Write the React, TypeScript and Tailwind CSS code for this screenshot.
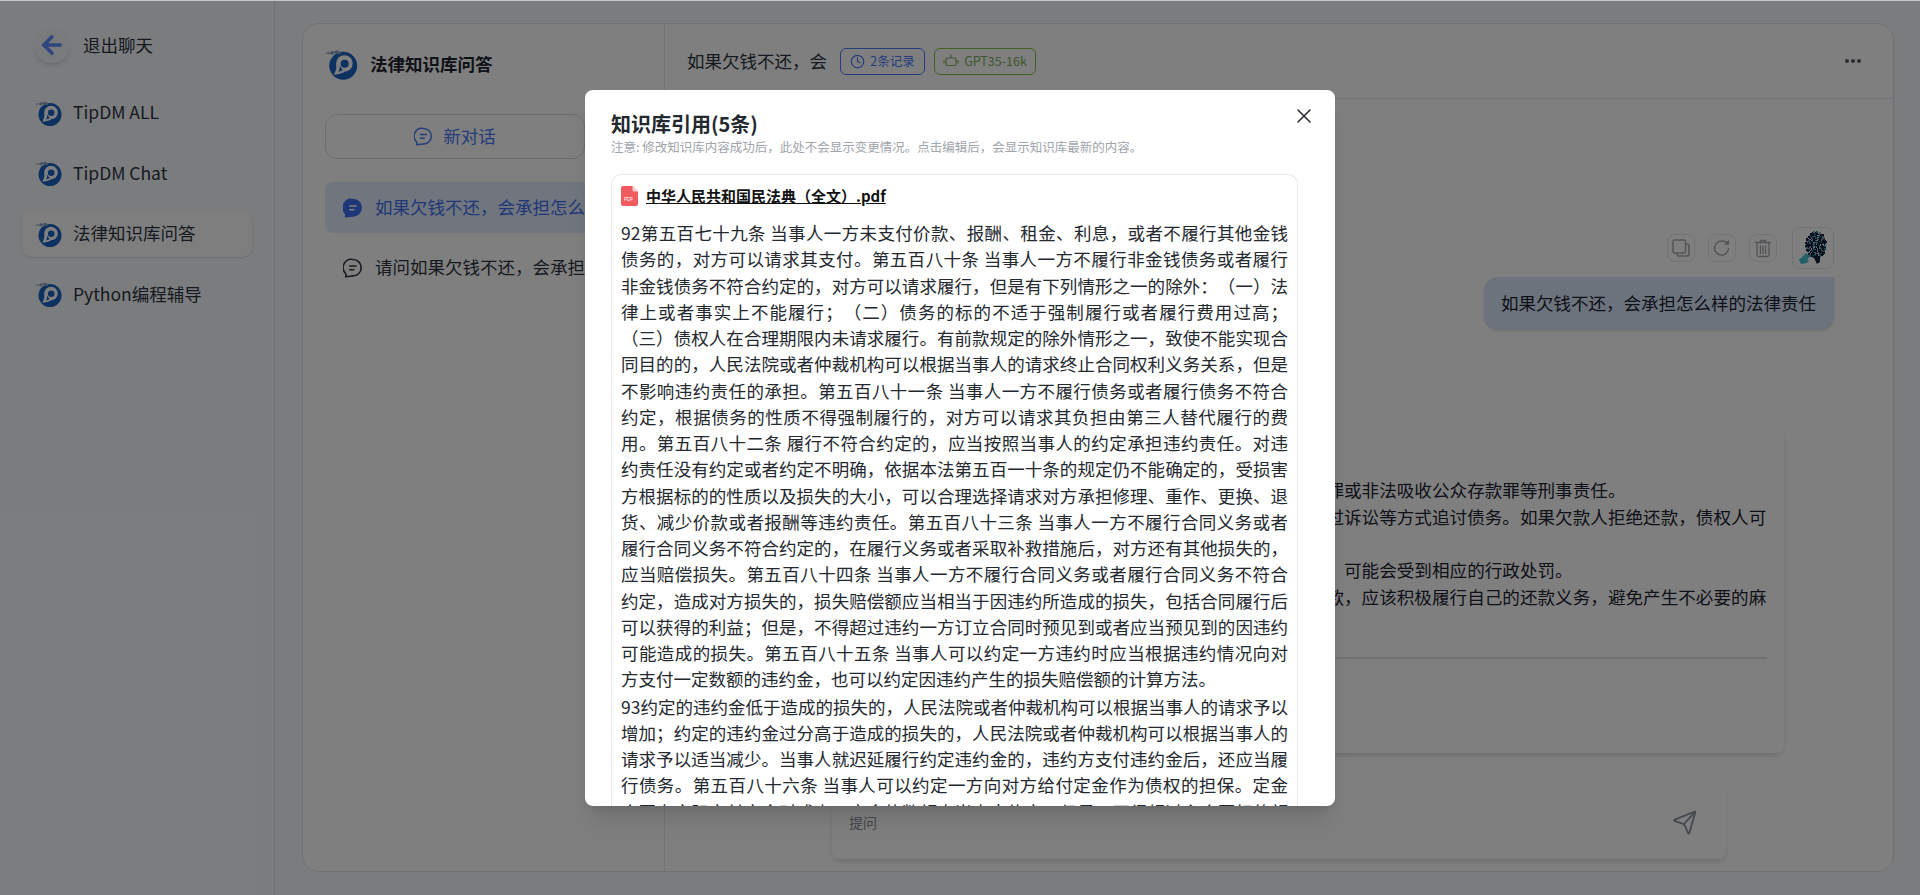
import React from 'react';
import { ArrowLeft, Clock, Send, X } from 'lucide-react';

const Logo = ({ size = 28 }: { size?: number }) => (
  <svg width={size} height={size} viewBox="0 0 28 28" className="shrink-0">
    <circle cx="15" cy="15.500" r="11.500" fill="#1a62c2" />
    <circle cx="16" cy="13.500" r="6.800" fill="#fff" />
    <path d="M9.500 13c.2 4-.6 7.500-2.300 9.800 2.500-.2 5-.6 8-1.800l1-1-6-6z" fill="#fff" />
    <circle cx="16.200" cy="13.700" r="3.300" fill="#1a62c2" />
    <path d="M12 15.500c.4 2-.3 3.800-1 4.800 1.400-.2 2.400-.6 3.600-1.400z" fill="#1a62c2" />
    <path d="M0 5.500l3-1.500 1 1 2-2 1.500 1 2-1.500 2 1 2 .5-1 2-2.500 0-2-1-2 1.500-2-1z" fill="#8aa2c6" />
  </svg>
);

const ChatIcon = ({ size = 20, filled = false }: { size?: number; filled?: boolean }) => (
  <svg width={size} height={size} viewBox="0 0 20 20" fill="none" stroke="currentColor" strokeWidth="1.600" strokeLinecap="round" className="shrink-0">
    <path d="M10 1.500a8.200 8.200 0 0 1 0 16.400c-2 0-5 .9-7.400 .7 .8-1 .7-2-.2-3.400A8.200 8.200 0 0 1 10 1.500z" fill={filled ? 'currentColor' : 'none'} strokeLinejoin="round" />
    <path d="M6.800 8h6.400M6.800 11.800h4" stroke={filled ? '#fff' : 'currentColor'} />
  </svg>
);

const RobotIcon = () => (
  <svg width="16" height="16" viewBox="0 0 16 16" fill="none" stroke="currentColor" strokeWidth="1.200" strokeLinecap="round">
    <path d="M8 2v2.500" />
    <rect x="3" y="5" width="10" height="7.500" rx="1.500" />
    <path d="M1 7.500v2.500M15 7.500v2.500" />
  </svg>
);

const CopyIcon = () => (
  <svg width="20" height="20" viewBox="0 0 20 20" fill="none" stroke="currentColor" strokeWidth="1.500" strokeLinejoin="round">
    <rect x="2" y="2" width="12.500" height="13" rx="2" />
    <path d="M14.500 6H16a2 2 0 0 1 2 2v8a2 2 0 0 1-2 2H8a2 2 0 0 1-2-2v-1" />
  </svg>
);

const RefreshIcon = () => (
  <svg width="20" height="20" viewBox="0 0 20 20" fill="none" stroke="currentColor" strokeWidth="1.500" strokeLinecap="round">
    <path d="M16.500 10.500A7 7 0 1 1 10.500 3.200c2-.1 3.800.6 5 1.800" />
    <path d="M17 1.800v5h-5z" fill="currentColor" stroke="none" />
  </svg>
);

const TrashIcon = () => (
  <svg width="18" height="20" viewBox="0 0 18 20" fill="none" stroke="currentColor" strokeWidth="1.300" strokeLinecap="round">
    <path d="M1.500 4.500h15M6.500 4.500V2.500h5v2M3 4.500v12.500a1.500 1.500 0 0 0 1.500 1.500h9a1.500 1.500 0 0 0 1.500-1.500V4.500" />
    <path d="M6.500 8v7.500M9 8v7.500M11.500 8v7.500" />
  </svg>
);

const PdfIcon = () => (
  <svg width="17" height="20" viewBox="0 0 17 20" className="shrink-0">
    <path d="M2 0h9.500L17 5.500V18a2 2 0 0 1-2 2H2a2 2 0 0 1-2-2V2a2 2 0 0 1 2-2z" fill="#ef5b5f" />
    <path d="M11.500 0L17 5.500h-4a1.500 1.500 0 0 1-1.500-1.500z" fill="#fbd0d1" />
    <text x="3" y="15" fontSize="4.500" fill="#fff" fontFamily="Liberation Sans">PDF</text>
  </svg>
);

// scribbled pixel portrait used as the user's avatar
const avatarPixels = Array.from({ length: 240 }, (_, i) => {
  const a = i * 2.399;
  const r = Math.sqrt(i / 240) * 12;
  return {
    x: Math.round(17 + Math.cos(a) * r * 0.85),
    y: Math.round(14 + Math.sin(a) * r * 1.1),
    fill: i % 11 === 0 ? '#cfe3ee' : i % 6 === 0 ? '#2f8ea6' : i % 5 === 0 ? '#9aa7b5' : '#14233d',
  };
});

const Avatar = () => (
  <svg width="30" height="36" viewBox="0 0 30 36">
    {avatarPixels.map((p, i) => (
      <rect key={i} x={p.x} y={p.y} width="2" height="2" fill={p.fill} />
    ))}
    <path d="M1 30l7-7 4 3-3 4 2 0-2 3-6 1z" fill="#45c3cf" />
    <path d="M15 26h7v6l-3 2z" fill="#14233d" />
  </svg>
);

const agents = ['TipDM ALL', 'TipDM Chat', '法律知识库问答', 'Python编程辅导'];

const para92 =
  '92第五百七十九条 当事人一方未支付价款、报酬、租金、利息，或者不履行其他金钱债务的，对方可以请求其支付。第五百八十条 当事人一方不履行非金钱债务或者履行非金钱债务不符合约定的，对方可以请求履行，但是有下列情形之一的除外：（一）法律上或者事实上不能履行；（二）债务的标的不适于强制履行或者履行费用过高；（三）债权人在合理期限内未请求履行。有前款规定的除外情形之一，致使不能实现合同目的的，人民法院或者仲裁机构可以根据当事人的请求终止合同权利义务关系，但是不影响违约责任的承担。第五百八十一条 当事人一方不履行债务或者履行债务不符合约定，根据债务的性质不得强制履行的，对方可以请求其负担由第三人替代履行的费用。第五百八十二条 履行不符合约定的，应当按照当事人的约定承担违约责任。对违约责任没有约定或者约定不明确，依据本法第五百一十条的规定仍不能确定的，受损害方根据标的的性质以及损失的大小，可以合理选择请求对方承担修理、重作、更换、退货、减少价款或者报酬等违约责任。第五百八十三条 当事人一方不履行合同义务或者履行合同义务不符合约定的，在履行义务或者采取补救措施后，对方还有其他损失的，应当赔偿损失。第五百八十四条 当事人一方不履行合同义务或者履行合同义务不符合约定，造成对方损失的，损失赔偿额应当相当于因违约所造成的损失，包括合同履行后可以获得的利益；但是，不得超过违约一方订立合同时预见到或者应当预见到的因违约可能造成的损失。第五百八十五条 当事人可以约定一方违约时应当根据违约情况向对方支付一定数额的违约金，也可以约定因违约产生的损失赔偿额的计算方法。';

const para93 =
  '93约定的违约金低于造成的损失的，人民法院或者仲裁机构可以根据当事人的请求予以增加；约定的违约金过分高于造成的损失的，人民法院或者仲裁机构可以根据当事人的请求予以适当减少。当事人就迟延履行约定违约金的，违约方支付违约金后，还应当履行债务。第五百八十六条 当事人可以约定一方向对方给付定金作为债权的担保。定金合同自实际交付定金时成立。定金的数额由当事人约定；但是，不得超过主合同标的额的百分之二十，超过部分不产生定金的效力。';

const answerLines = [
  '如果欠钱不还，可能会承担以下法律责任：',
  '刑事责任：如果欠款金额较大，且存在恶意逃避还款的行为，则可能还会构成诈骗罪或非法吸收公众存款罪等刑事责任。',
  '民事责任：债务人应当按约定偿还欠款及利息，债权人有权依法向法院起诉，并通过诉讼等方式追讨债务。如果欠款人拒绝还款，债权人可',
  '以向法院申请强制执行。',
  '行政责任：如果欠款人违反相关规定，如恶意逃避债务或隐匿财产，情节较为轻微，可能会受到相应的行政处罚。',
  '总之，欠钱不还会带来严重的法律后果，因此作为债务人，在借款后务必要按时还款，应该积极履行自己的还款义务，避免产生不必要的麻',
  '烦。',
];

export default function App() {
  return (
    <div className="relative flex h-[895px] w-[1920px] overflow-hidden bg-[#f7f9fc] font-['Noto_Sans_CJK_SC',sans-serif] text-[17.5px] text-[#2d3440] [text-spacing-trim:space-all]">
      {/* agent list */}
      <aside className="flex w-[275px] shrink-0 flex-col border-r border-[#dde3ea] pt-[27px]">
        <div className="mb-[26px] flex h-[36px] items-center gap-[13px] pl-[34px]">
          <div className="flex h-[36px] w-[36px] items-center justify-center rounded-full bg-[#f3f5f8] shadow-md">
            <ArrowLeft size={28} strokeWidth={3} className="text-[#5f8cff]" />
          </div>
          <span>退出聊天</span>
        </div>
        <div className="flex flex-col gap-[13.5px]">
          {agents.map((name) => (
            <div
              key={name}
              className={`ml-[22px] flex h-[47px] w-[230px] items-center gap-[10px] rounded-[10px] pl-[13px] ${
                name === '法律知识库问答' ? 'bg-[#fdfdfe] shadow-sm' : ''
              }`}
            >
              <Logo />
              <span>{name}</span>
            </div>
          ))}
        </div>
      </aside>

      <main className="flex-1 pb-[23px] pl-[27px] pr-[26px] pt-[23px]">
        <div className="flex h-full overflow-hidden rounded-[17px] border border-[#dde3ea] bg-white">
          {/* history */}
          <section className="flex w-[362px] shrink-0 flex-col border-r border-[#e4e8ee] px-[22px]">
            <div className="mb-[33px] mt-[23px] flex h-[34px] items-center gap-[11px]">
              <Logo size={34} />
              <span className="font-bold text-[#1f2530]">法律知识库问答</span>
            </div>
            <button className="mb-[23px] flex h-[45px] w-[260px] items-center justify-center gap-[10px] rounded-[12px] border border-[#d5dbe3] text-[#4a7bf5]">
              <ChatIcon size={19} />
              <span>新对话</span>
            </button>
            <div className="flex flex-col gap-[9px]">
              <div className="flex h-[51px] items-center gap-[12px] rounded-[8px] bg-[#e2ebfd] pl-[18px] text-[#3d6ff0]">
                <ChatIcon filled />
                <span className="truncate">如果欠钱不还，会承担怎么样的法律责任</span>
              </div>
              <div className="flex h-[51px] items-center gap-[12px] rounded-[8px] pl-[18px]">
                <ChatIcon />
                <span className="truncate">请问如果欠钱不还，会承担怎么样的法律责任</span>
              </div>
            </div>
          </section>

          {/* conversation */}
          <section className="flex min-w-0 flex-1 flex-col">
            <header className="flex h-[75px] shrink-0 items-center border-b border-[#e4e8ee] pl-[22px] pr-[32px]">
              <span className="w-[141px] whitespace-nowrap">如果欠钱不还，会</span>
              <div className="ml-[12px] flex h-[27px] w-[85px] items-center justify-center gap-[5px] rounded-[6px] border border-[#4a7bf5] text-[12.5px] text-[#4a7bf5]">
                <Clock size={15} />
                <span>2条记录</span>
              </div>
              <div className="ml-[9px] flex h-[27px] w-[102px] items-center justify-center gap-[5px] rounded-[6px] border border-[#7cc63c] text-[12.5px] text-[#7fae58]">
                <RobotIcon />
                <span>GPT35-16k</span>
              </div>
              <div className="ml-auto flex gap-[2px]">
                <i className="h-[4px] w-[4px] rounded-full bg-[#555b66]" />
                <i className="h-[4px] w-[4px] rounded-full bg-[#555b66]" />
                <i className="h-[4px] w-[4px] rounded-full bg-[#555b66]" />
              </div>
            </header>

            <div className="flex min-h-0 flex-1 flex-col pt-[128px]">
              <div className="flex items-center justify-end gap-[13px] pr-[59px] text-[#a4a9b0]">
                <div className="flex h-[28px] w-[28px] items-center justify-center rounded-[8px] border border-[#e4e7ec]">
                  <CopyIcon />
                </div>
                <div className="flex h-[28px] w-[28px] items-center justify-center rounded-[8px] border border-[#e4e7ec]">
                  <RefreshIcon />
                </div>
                <div className="flex h-[28px] w-[28px] items-center justify-center rounded-[8px] border border-[#e4e7ec]">
                  <TrashIcon />
                </div>
                <div className="ml-[2px] flex h-[42px] w-[42px] items-center justify-center rounded-[8px] border border-[#e4e7ec]">
                  <Avatar />
                </div>
              </div>
              <div className="mr-[59px] mt-[8px] flex h-[53px] w-[350px] items-center self-end rounded-[14px] rounded-tr-none bg-[#d8e6fb] pl-[17px] text-[#1c2230] shadow-sm">
                如果欠钱不还，会承担怎么样的法律责任
              </div>

              <div className="ml-[11px] mr-[109px] mt-[96px] h-[327px] shrink-0 rounded-[8px] bg-white px-[17px] pt-[24px] text-[17.6px] leading-[26.8px] text-[#1c2230] shadow-md">
                {answerLines.map((line) => (
                  <p key={line} className="whitespace-nowrap">{line}</p>
                ))}
                <hr className="mt-[19px] border-t-2 border-[#e5e7eb]" />
              </div>

              <div className="mb-[12px] mt-auto flex h-[73px] w-[894px] shrink-0 items-center justify-between self-center rounded-[8px] bg-white pl-[17px] pr-[28px] shadow-md">
                <span className="text-[14px] text-[#8a8f99]">提问</span>
                <Send size={26} strokeWidth={1.7} className="-rotate-[3deg] text-[#8a93a3]" />
              </div>
            </div>
          </section>
        </div>
      </main>

      {/* citation dialog over a dimmed page */}
      <div className="absolute inset-0 flex items-start justify-center bg-black/50 pt-[90px]">
        <div className="relative flex h-[716px] w-[750px] flex-col overflow-hidden rounded-[8px] bg-white pl-[26px] pr-[37px] shadow-xl">
          <h2 className="mt-[20px] text-[20px] font-semibold leading-[28px] text-[#24282f]">知识库引用(5条)</h2>
          <p className="mb-[18px] text-[12.5px] leading-[18px] text-[#a0a4ab]">
            注意: 修改知识库内容成功后，此处不会显示变更情况。点击编辑后，会显示知识库最新的内容。
          </p>
          <button className="absolute right-[19px] top-[14px] text-[#24282f]">
            <X size={24} strokeWidth={1.5} />
          </button>
          <div className="min-h-0 flex-1 rounded-[10px] rounded-b-none border border-b-0 border-[#e8ebf0] px-[9px] pt-[9px]">
            <div className="flex h-[24px] items-center gap-[8px]">
              <PdfIcon />
              <span className="text-[15px] font-semibold text-[#111] underline">中华人民共和国民法典（全文）.pdf</span>
            </div>
            <div className="mt-[12px] text-justify text-[17.5px] leading-[26.25px] text-[#24282f]">
              <p>{para92}</p>
              <p className="mt-px">{para93}</p>
            </div>
          </div>
        </div>
      </div>
      <div className="absolute inset-x-0 top-0 h-px bg-[#c4c6c8]" />
    </div>
  );
}
